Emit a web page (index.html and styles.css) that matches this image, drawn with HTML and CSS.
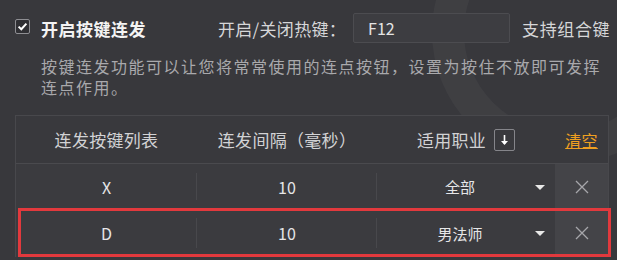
FILE: index.html
```
<!DOCTYPE html>
<html>
<head>
<meta charset="utf-8">
<title>按键连发</title>
<link rel="stylesheet" href="styles.css">
</head>
<body>
<div class="outer">
    <div class="ring"></div>
    <div class="top">
        <span class="check"><svg width="15" height="15" viewBox="0 0 15 15"><rect x="0.5" y="0.5" width="14" height="14" rx="1.5" fill="#2f2f33" stroke="#8e8e92"/><path d="M3.6 7.6 L6.3 10.2 L11.4 4.6" fill="none" stroke="#fff" stroke-width="2"/></svg></span>
        <b class="title">开启按键连发</b>
        <span class="label">开启/关闭热键：</span>
        <div class="hotkey">F12</div>
        <span class="label tip">支持组合键</span>
    </div>
    <p class="desc">按键连发功能可以让您将常常使用的连点按钮，设置为按住不放即可发挥<br>连点作用。</p>
    <div class="table">
        <div class="row head">
            <div class="cell">连发按键列表</div>
            <div class="cell">连发间隔（毫秒）</div>
            <div class="cell">适用职业<span class="sort"><svg width="9" height="12" viewBox="0 0 9 12"><path d="M4.5 1 V10" stroke="#fff" stroke-width="1.6"/><path d="M1 7 L4.5 11 L8 7 Z" fill="#fff"/></svg></span></div>
            <div class="cell"><a class="clear">清空</a></div>
        </div>
        <div class="row">
            <div class="cell sep">X</div>
            <div class="cell sep">10</div>
            <div class="cell job">全部<i class="caret"></i></div>
            <div class="cell del"><svg width="14" height="14" viewBox="0 0 14 14"><path d="M1 1 L13 13 M13 1 L1 13" stroke="#a6a6aa" stroke-width="1.3"/></svg></div>
        </div>
        <div class="row last">
            <div class="cell sep">D</div>
            <div class="cell sep">10</div>
            <div class="cell job">男法师<i class="caret"></i></div>
            <div class="cell del"><svg width="14" height="14" viewBox="0 0 14 14"><path d="M1 1 L13 13 M13 1 L1 13" stroke="#a6a6aa" stroke-width="1.3"/></svg></div>
        </div>
    </div>
    <div class="mark"></div>
</div>
</body>
</html>
```
FILE: styles.css
```
html,body{ margin:0; padding:0; background:#38383c;}
body{ font-family:"Noto Sans CJK SC","Noto Sans",sans-serif; color:#e6e6e8;}
.outer{ position:relative; width:617px; height:260px; overflow:hidden; padding-top:13px; box-sizing:border-box;}
.ring{ position:absolute; left:432px; top:-100px; width:200px; height:200px; border-radius:50%; border:32px solid rgba(255,255,255,0.035);}
.top{ position:relative; display:flex; align-items:center; height:30px; padding-left:15px;}
.check{ display:block; width:15px; height:15px; margin-top:-3px;}
.check svg{ display:block;}
.title{ margin-left:11px; font-size:17px; letter-spacing:0.5px; color:#f4f4f4; width:177px;}
.label{ font-size:17px; color:#d6d6d8; letter-spacing:0.3px;}
.hotkey{ width:141px; height:28px; line-height:28px; margin-left:7px; padding-left:14px; border:1px solid #4c4c50; border-radius:2px; background:#3d3d41; color:#e4e4e4; font-size:16px;}
.tip{ margin-left:12px; letter-spacing:0.6px;}
.desc{ position:relative; margin:13px 0 0 41px; font-size:16px; line-height:21px; letter-spacing:1.5px; color:#a9a9ac;}
.table{ position:relative; margin:17px 0 0 15px; width:594px; border:1px solid #48484c; border-bottom:none; box-sizing:border-box;}
.row{ display:grid; grid-template-columns:181px 180px 178px 53px; height:45px; background:#3b3b3f;}
.row.head{ height:47px; border-bottom:1px solid #4a4a4e; background:#39393d;}
.row.last{ height:48px;}
.cell{ position:relative; display:flex; align-items:center; justify-content:center; font-size:16px;}
.head .cell{ font-size:17px; letter-spacing:0.3px; color:#d2d2d4;}
.sep:after{ content:''; position:absolute; right:0; top:9px; bottom:9px; width:1px; background:#48484c;}
.sort{ display:flex; align-items:center; justify-content:center; width:21px; height:22px; margin-left:8px; border:1px solid #85858a; border-radius:2px; box-sizing:border-box;}
.sort svg{ display:block;}
.clear{ color:#f0a020; text-decoration:underline; font-size:16px; cursor:pointer;}
.job{ padding-right:12px; font-size:15px;}
.caret{ position:absolute; right:10px; top:50%; margin-top:-2px; width:0; height:0; border-left:5px solid transparent; border-right:5px solid transparent; border-top:5px solid #e8e8e8;}
.del{ background:#444448;}
.del svg{ display:block;}
.mark{ position:absolute; left:18px; top:208px; width:593px; height:49px; border:3px solid #e2393d; box-sizing:border-box;}
```
